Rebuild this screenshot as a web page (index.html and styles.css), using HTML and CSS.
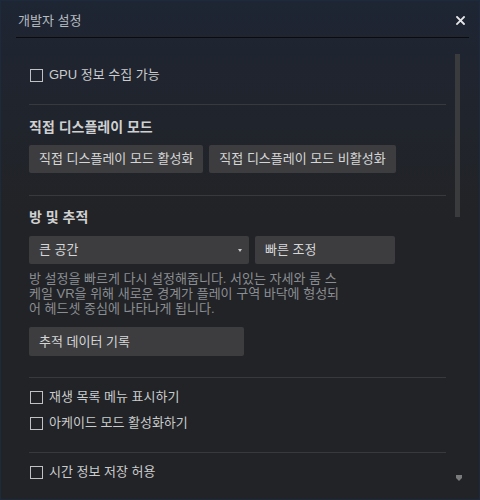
FILE: index.html
```html
<!DOCTYPE html>
<html lang="ko">
<head>
<meta charset="utf-8">
<title>개발자 설정</title>
<link rel="stylesheet" href="styles.css">
</head>
<body>
<div class="window">
  <div class="header">
    <div class="title">개발자 설정</div>
    <svg class="close" width="9" height="9" viewBox="0 0 9 9"><path d="M1 1 L8 8 M8 1 L1 8" stroke="#e4e6e8" stroke-width="1.8" stroke-linecap="square"/></svg>
  </div>
  <div class="body">
    <div class="main">
      <label class="check first"><span class="box"></span><span>GPU 정보 수집 가능</span></label>
      <div class="sep s1"></div>
      <div class="heading h1">직접 디스플레이 모드</div>
      <div class="row r1">
        <div class="btn">직접 디스플레이 모드 활성화</div>
        <div class="btn">직접 디스플레이 모드 비활성화</div>
      </div>
      <div class="sep s2"></div>
      <div class="heading h2">방 및 추적</div>
      <div class="row r2">
        <div class="btn select">큰 공간<span class="arrow"></span></div>
        <div class="btn quick">빠른 조정</div>
      </div>
      <p class="desc">방 설정을 빠르게 다시 설정해줍니다. 서있는 자세와 룸 스<br>케일 VR을 위해 새로운 경계가 플레이 구역 바닥에 형성되<br>어 헤드셋 중심에 나타나게 됩니다.</p>
      <div class="btn track">추적 데이터 기록</div>
      <div class="sep s3"></div>
      <label class="check c2"><span class="box"></span><span>재생 목록 메뉴 표시하기</span></label>
      <label class="check c3"><span class="box"></span><span>아케이드 모드 활성화하기</span></label>
      <div class="sep s4"></div>
      <label class="check c4"><span class="box"></span><span>시간 정보 저장 허용</span></label>
    </div>
    <div class="scroll">
      <div class="thumb"></div>
      <svg class="down" width="6" height="6" viewBox="0 0 6 6"><polygon points="0,0 6,0 6,3 3,6 0,3" fill="#7a7b7d"/></svg>
    </div>
  </div>
</div>
</body>
</html>
```
FILE: styles.css
```css
html, body {
  margin: 0;
  padding: 0;
  background: #222326;
}
body {
  font-family: "Liberation Sans", "Noto Sans CJK KR", sans-serif;
  font-size: 13px;
  color: #c8cacc;
}
.window {
  width: 480px;
  height: 500px;
  box-sizing: border-box;
  border: 1px solid #1d2a3b;
  background: linear-gradient(180deg, #1e2533 0px, #20242c 120px, #222326 220px, #222326 100%);
  display: flex;
  flex-direction: column;
}
.header {
  height: 36px;
  margin: 0 10px 0 15px;
  padding: 0 4px 0 2px;
  border-bottom: 1px solid #0a0b0d;
  display: flex;
  align-items: center;
  justify-content: space-between;
  flex: none;
}
.title {
  font-size: 13px;
  color: #b6bbc0;
  line-height: 16px;
  padding-top: 3px;
}
.close {
  display: block;
  margin-top: 3px;
}
.body {
  flex: 1;
  display: flex;
  padding-left: 28px;
}
.main {
  width: 417px;
  flex: none;
}
.scroll {
  width: 5px;
  margin-left: 9px;
  padding: 16px 0 18px;
  display: flex;
  flex-direction: column;
  justify-content: space-between;
  align-items: center;
}
.thumb {
  width: 5px;
  height: 163px;
  background: #3a3b3d;
}
.down {
  display: block;
  margin-left: 3px;
}
.check {
  display: flex;
  align-items: center;
  height: 16px;
  line-height: 16px;
  color: #c9cbcd;
}
.box {
  width: 13px;
  height: 13px;
  box-sizing: border-box;
  border: 1px solid #bfc1c3;
  margin: 0 6px 0 1px;
  flex: none;
}
.first { margin-top: 29px; }
.c2 { margin-top: 11px; }
.c3 { margin-top: 10px; }
.c4 { margin-top: 11px; }
.sep {
  height: 1px;
  background: #38393c;
}
.s1 { margin-top: 21px; }
.s2 { margin-top: 22px; }
.s3 { margin-top: 21px; }
.s4 { margin-top: 21px; }
.heading {
  font-size: 14px;
  font-weight: bold;
  line-height: 16px;
  color: #cfd0d1;
}
.h1 { margin-top: 14px; }
.h2 { margin-top: 13px; }
.row {
  display: flex;
  gap: 6px;
}
.r1 { margin-top: 10px; }
.r2 { margin-top: 11px; }
.btn {
  height: 28px;
  line-height: 28px;
  padding: 0 10px;
  background: #3d3d3f;
  color: #d4d6d8;
  border-radius: 2px;
  white-space: nowrap;
  box-sizing: border-box;
}
.select {
  width: 220px;
  position: relative;
}
.arrow {
  position: absolute;
  left: 209px;
  top: 13px;
  width: 0;
  height: 0;
  border-left: 2px solid transparent;
  border-right: 2px solid transparent;
  border-top: 3px solid #c8c8c8;
}
.quick { width: 140px; }
.desc {
  margin: 7px 0 0;
  line-height: 15px;
  color: #8a8e93;
  white-space: nowrap;
}
.track {
  width: 215px;
  margin-top: 11px;
  height: 29px;
  line-height: 29px;
}
```
